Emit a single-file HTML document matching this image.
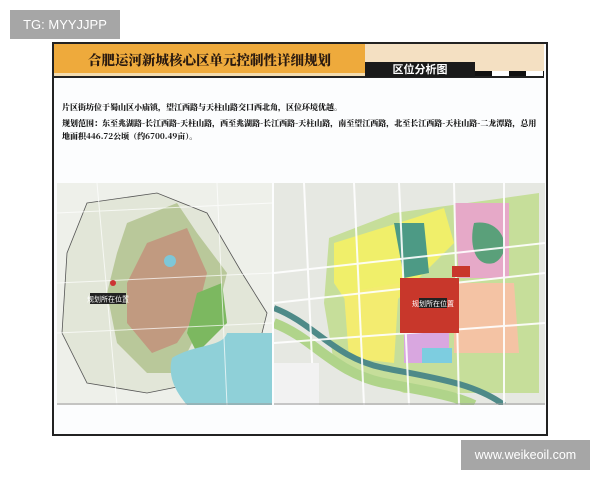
<!DOCTYPE html>
<html><head><meta charset="utf-8"><style>
body{margin:0;width:600px;height:480px;background:#fff;position:relative;overflow:hidden;font-family:"Liberation Sans","Noto Sans CJK SC",sans-serif}
.abs{position:absolute}
.t{font-family:'Noto Serif CJK SC',serif;font-weight:900;color:#1a1a1a;white-space:nowrap;font-size:8px}
</style></head><body>
<div class="abs" style="left:52px;top:42px;width:492px;height:390px;border:2px solid #222;background:#fcfdfe"></div>
<div class="abs" style="left:54px;top:44px;width:311px;height:32px;background:#eeaa3c"></div>
<div class="abs" style="left:365px;top:44px;width:179px;height:32px;background:#f4e0c2"></div>
<div class="abs" style="left:54px;top:73px;width:311px;height:3px;background:#f3dcb0"></div>
<div class="abs" style="left:54px;top:76px;width:490px;height:2px;background:#222"></div>
<div class="abs" style="left:365px;top:62px;width:110px;height:15px;background:#1a1a1a;color:#fff;font-size:11px;font-weight:bold;line-height:15px;text-align:center;font-family:'Noto Sans CJK SC',sans-serif">区位分析图</div>
<div class="abs" style="left:475px;top:71px;width:69px;height:5px;background:repeating-linear-gradient(90deg,#111 0 17px,#fff 17px 34px)"></div>
<div class="abs" style="left:54px;top:44px;width:311px;height:30px;line-height:30px;text-align:center;font-size:13.5px;font-weight:900;color:#2a1a10;font-family:'Noto Serif CJK SC',serif">合肥运河新城核心区单元控制性详细规划</div>
<div class="abs t" style="left:62px;top:102px">片区街坊位于蜀山区小庙镇，望江西路与天柱山路交口西北角，区位环境优越。</div>
<div class="abs t" style="left:62px;top:118px">规划范围：东至兆湖路-长江西路-天柱山路，西至兆湖路-长江西路-天柱山路，南至望江西路，北至长江西路-天柱山路-二龙潭路，总用</div>
<div class="abs t" style="left:62px;top:131px">地面积446.72公顷（约6700.49亩）。</div>
<!-- left map -->
<svg class="abs" style="left:57px;top:183px" width="215" height="222" viewBox="0 0 215 222">
<rect width="215" height="222" fill="#eef0ea"/>
<path d="M30 20 L100 10 L150 30 L185 90 L210 130 L200 170 L160 175 L140 200 L90 210 L30 200 L5 150 L10 70 Z" fill="#e2e6d8" stroke="#555" stroke-width="0.8"/>
<path d="M70 40 L120 20 L140 50 L170 90 L160 130 L140 150 L120 190 L90 190 L60 160 L50 110 L60 70Z" fill="#b9c89a"/>
<path d="M90 60 L130 45 L150 90 L140 130 L120 160 L95 170 L70 140 L70 100Z" fill="#c19a80"/>
<path d="M140 110 L165 100 L170 140 L140 170 L130 150Z" fill="#7cb860"/>
<path d="M115 175 C140 160 165 165 170 150 L215 150 L215 222 L130 222 C120 210 110 195 115 175Z" fill="#8fd0d8"/>
<path d="M0 30 L215 20 M0 100 L215 90 M40 0 L60 222 M160 0 L170 222 M0 150 L215 140" stroke="#fff" stroke-width="1" fill="none" opacity=".7"/>
<circle cx="113" cy="78" r="6" fill="#7ec7d8"/>
<rect x="33" y="110" width="36" height="11" fill="#222"/>
<text x="51" y="118.5" font-size="7" fill="#fff" text-anchor="middle" font-family="Noto Sans CJK SC,sans-serif">规划所在位置</text>
<circle cx="56" cy="100" r="3" fill="#c33"/>
<path d="M0 221 H215" stroke="#999"/>
</svg>
<!-- right map -->
<svg class="abs" style="left:274px;top:183px" width="271" height="222" viewBox="0 0 271 222">
<rect width="271" height="222" fill="#e6e8e2"/>
<path d="M55 55 L120 30 L230 15 L265 10 L265 210 L130 210 L60 180 L50 120Z" fill="#c6de9a"/>
<path d="M60 60 L140 35 L170 25 L180 60 L150 90 L120 120 L80 130 L60 100Z" fill="#f0ef6a"/>
<path d="M70 110 L125 100 L120 180 L75 175Z" fill="#f3ec70"/>
<path d="M180 20 L235 20 L235 95 L185 95Z" fill="#e6a9c8"/>
<path d="M180 100 L240 100 L245 170 L180 170Z" fill="#f4c3a4"/>
<path d="M130 150 L175 150 L175 180 L130 180Z" fill="#d9a7e0"/>
<rect x="148" y="165" width="30" height="15" fill="#7dcde0"/>
<path d="M200 40 C230 35 240 70 220 80 C200 85 195 60 200 40Z" fill="#5aa07a"/>
<path d="M120 40 L150 40 L155 90 L130 95Z" fill="#4d9a85"/>
<path d="M0 125 C40 140 60 175 110 185 C160 195 200 200 230 222" stroke="#4e8a88" stroke-width="6" fill="none"/>
<path d="M0 140 C40 155 60 190 110 200 C150 208 180 212 200 222" stroke="#b0d48a" stroke-width="10" fill="none"/>
<g stroke="#fff" stroke-width="2" fill="none" opacity=".9">
<path d="M0 90 L271 60"/><path d="M0 120 L271 90"/><path d="M0 160 L271 140"/><path d="M40 222 L30 0"/><path d="M90 222 L80 0"/><path d="M135 222 L125 0"/><path d="M185 222 L180 0"/><path d="M230 222 L230 0"/>
</g>
<rect x="126" y="95" width="59" height="55" fill="#c8372b"/>
<rect x="178" y="83" width="18" height="11" fill="#c8372b"/>
<rect x="145" y="115" width="28" height="10" fill="#222"/>
<text x="159" y="123" font-size="7" fill="#fff" text-anchor="middle" font-family="Noto Sans CJK SC,sans-serif">规划所在位置</text>
<rect x="0" y="180" width="45" height="42" fill="#f2f2f2"/>
<path d="M0 221 H271" stroke="#999"/>
</svg>
<div class="abs" style="left:10px;top:10px;width:110px;height:29px;background:#a6a6a6;color:#fff;font-size:13px;line-height:29px;text-align:center">TG: MYYJJPP</div>
<div class="abs" style="left:461px;top:440px;width:129px;height:30px;background:#a6a6a6;color:#fff;font-size:12.5px;line-height:30px;text-align:center">www.weikeoil.com</div>
</body></html>
